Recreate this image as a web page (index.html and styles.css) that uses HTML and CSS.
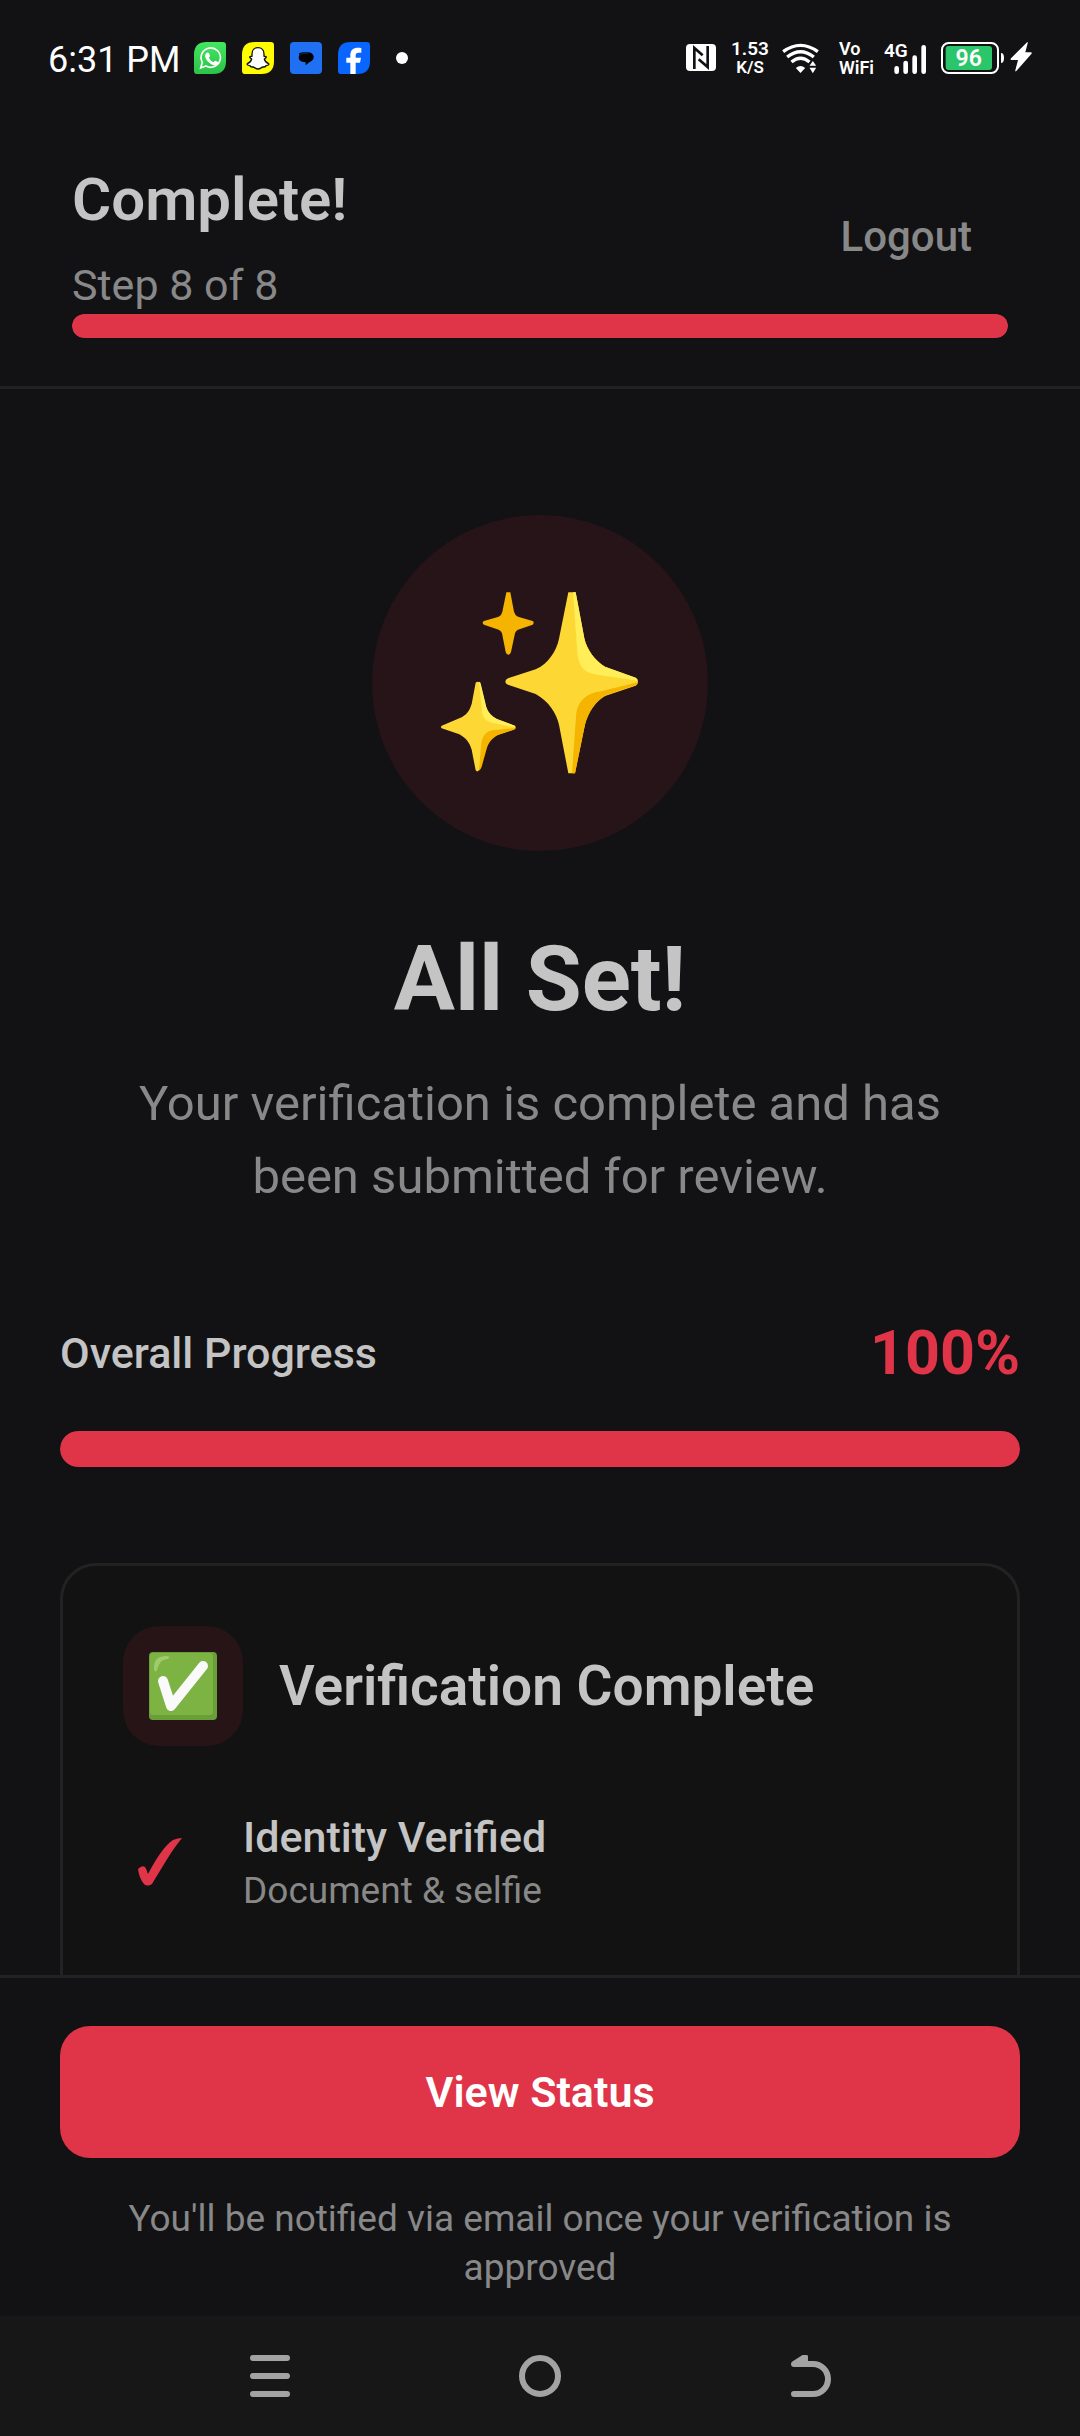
FILE: index.html
```html
<!DOCTYPE html>
<html lang="en">
<head>
<meta charset="utf-8">
<meta name="viewport" content="width=device-width, initial-scale=1">
<title>Verification complete</title>
<link rel="stylesheet" href="styles.css">
</head>
<body>
<div class="screen">
  <div class="status">
    <div class="status-left">
      <span class="clock">6:31 PM</span>
      <svg class="app-icon" viewBox="492 66 96 96" aria-label="WhatsApp">
        <defs><linearGradient id="wa" x1="0" y1="0" x2="0" y2="1"><stop offset="0" stop-color="#43e660"/><stop offset="1" stop-color="#2bc348"/></linearGradient></defs>
        <path fill="url(#wa)" d="M530 66h48q10 0 10 10v48q0 38-38 38h-48q-10 0-10-10v-48q0-38 38-38z"/>
        <path fill="none" stroke="#fff" stroke-width="5" d="M512 144l5-17a29 29 0 1 1 11 11z"/>
        <path fill="#fff" d="M529 99c4-3 7-2 8 1l3 7c1 3-4 5-3 7 3 6 7 9 12 12 3 1 4-5 7-4l8 4c3 2 0 7-3 9-7 4-17 0-25-8-9-9-15-21-7-28z"/>
      </svg>
      <svg class="app-icon" viewBox="636 66 96 96" aria-label="Snapchat">
        <path fill="#fffc00" d="M674 66h48q10 0 10 10v48q0 38-38 38h-48q-10 0-10-10v-48q0-38 38-38z"/>
        <path fill="#fff" stroke="#111" stroke-width="4" stroke-linejoin="round" d="M684 83c11 0 18 8 18 19v7c3 0 6-1 7 2 0 3-4 4-6 6 2 8 7 12 13 14 2 4-4 5-8 6-1 5-4 4-9 4-5 1-8 6-15 6s-10-5-15-6c-5 0-8 1-9-4-4-1-10-2-8-6 6-2 11-6 13-14-2-2-6-3-6-6 1-3 4-2 7-2v-7c0-11 7-19 18-19z"/>
      </svg>
      <svg class="app-icon" viewBox="780 66 96 96" aria-label="Messages">
        <rect x="780" y="66" width="96" height="96" rx="12" fill="#1f70f2"/>
        <path fill="#000" d="M824 97h9c22 0 24 25 6 29l-12 10v-9c-16-1-25-9-19-22-3-5 2-8 16-8z"/>
        <path fill="none" stroke="#17407f" stroke-width="2" d="M809 106q4-6 16-6h10"/>
      </svg>
      <svg class="app-icon" viewBox="924 66 96 96" aria-label="Facebook">
        <path fill="#0866ff" d="M962 66h48q10 0 10 10v48q0 38-38 38h-48q-10 0-10-10v-48q0-38 38-38z"/>
        <path fill="#fff" d="M961 162v-34h-12v-15h12v-8c0-16 9-22 23-22 4 0 8 0 10 1v14h-8c-7 0-9 3-9 8v7h16l-3 15h-13v34z"/>
      </svg>
      <span class="dot"></span>
    </div>
    <div class="status-right">
      <svg class="nfc" viewBox="78 66 90 96" aria-label="NFC">
        <rect x="78" y="72" width="90" height="81" rx="12" fill="#fff"/>
        <path fill="none" stroke="#121214" stroke-width="8" d="M103 147V84l25 22M143 78v63l-27-23"/>
      </svg>
      <span class="stack rate"><b>1.53</b><small>K/S</small></span>
      <svg class="wifi" viewBox="365 66 110 96" aria-label="Wi-Fi">
        <g fill="none" stroke="#fff" stroke-width="10"><path d="M368 95q52-38 104 0M380 111q40-32 80 0M393 126q27-23 54 0"/></g>
        <path fill="#fff" d="M406 144q14-12 28 0l-14 15zM447 137l10-14 10 14zM447 143h20l-10 17z"/>
      </svg>
      <span class="stack vowifi"><b>Vo</b><b>WiFi</b></span>
      <svg class="signal" viewBox="675 66 129 96">
        <text x="675" y="110" font-size="57">4G</text>
        <path fill="none" stroke="#fff" stroke-width="14" stroke-linecap="round" d="M713 145v10M740 129v26M767 113v42M794 82v73"/>
      </svg>
      <svg class="battery" viewBox="846 66 189 96">
        <rect x="849" y="69" width="168" height="90" rx="20" fill="none" stroke="#fff" stroke-width="6"/>
        <rect x="860" y="78" width="139" height="72" rx="9" fill="#2bc66b"/>
        <path fill="#fff" d="M1026 99q9 0 9 15t-9 15z"/>
        <text x="929" y="138" font-size="69" text-anchor="middle">96</text>
      </svg>
      <svg class="bolt" viewBox="1052 66 66 96" aria-label="Charging"><path fill="#fff" d="M1104 66q2 0 1 4l-7 27h17q4 1 1 5l-45 51q-4 3-3-2l8-31h-20q-4-1-1-5z"/></svg>
    </div>
  </div>

  <header class="header">
    <div class="header-row">
      <div>
        <h2 class="step-title">Complete!</h2>
        <p class="step-count">Step 8 of 8</p>
      </div>
      <button class="logout" type="button">Logout</button>
    </div>
    <div class="bar bar-small"><div class="bar-fill" style="width:100%"></div></div>
  </header>

  <main class="content">
    <div class="hero-icon">
      <svg viewBox="66 44 1008 1008" aria-hidden="true">
        <path fill="#f4b400" d="M469 276h12l11 58q3 11 12 15l44 13q6 5 0 11l-44 15q-7 3-9 11l-12 56q-2 8-8 8t-8-8l-11-56q-2-8-10-11l-44-15q-8-6 0-11l44-13q9-4 11-15z"/>
        <path fill="#fdd835" d="M655 276h22l26 138c7 33 32 68 62 85l92 33q7 4 7 12t-7 12l-92 31c-32 18-50 50-60 85l-30 147h-20l-28-146c-8-35-31-70-70-92l-83-28q-8-3-8-9t8-10l83-27c38-18 62-54 70-92z"/>
        <path fill="#ffee58" d="M669 276h8l26 138c7 33 32 68 62 85l92 33q6 3 6 9l-120-18c-41-5-56-22-61-67z"/>
        <path fill="#f4b400" d="M863 546q0 7-6 9l-86 28c-32 16-56 52-66 90l-30 146h-9l12-170c2-43 28-71 75-76z"/>
        <path fill="#fdd835" d="M377 547q6-6 13 0l18 73c5 16 16 28 32 36l55 20q4 5 0 10l-55 19c-18 9-30 24-35 45l-16 56q-6 12-12 4l-12-62c-7-23-17-34-37-46l-53-18q-4-4 0-8l53-22c21-9 30-21 37-43z"/>
        <path fill="#ffee58" d="M387 544q5 0 6 9l16 67c5 16 16 28 32 36l53 20 2 5-66-13c-24-5-32-15-34-35z"/>
        <path fill="#f4b400" d="M497 683q-1 4-5 5l-48 16c-18 9-30 24-35 45l-14 50q-3 9-8 12l6-73c2-39 21-50 50-50z"/>
      </svg>
    </div>
    <h1 class="headline">All Set!</h1>
    <p class="lead">Your verification is complete and has been submitted for review.</p>

    <div class="progress-row">
      <span class="progress-label">Overall Progress</span>
      <span class="progress-value">100%</span>
    </div>
    <div class="bar bar-large"><div class="bar-fill" style="width:100%"></div></div>

    <section class="card">
      <div class="card-head">
        <div class="card-icon">
          <svg viewBox="0 0 68 68" aria-hidden="true">
            <rect width="68" height="68" rx="4" fill="#689f38"/>
            <rect x="1" y="1" width="63" height="62" rx="3" fill="#7cb342"/>
            <path fill="#aed581" opacity=".7" d="M5 17C5 7 9 4 18 4q4 1 1 3C11 8 10 12 8 18q-2 4-3-1z"/>
            <path fill="none" stroke="#fafafa" stroke-width="10" stroke-linecap="round" stroke-linejoin="round" d="M14 29l8 25 32-40"/>
          </svg>
        </div>
        <h2 class="card-title">Verification Complete</h2>
      </div>
      <ul class="checks">
        <li class="check">
          <svg class="tick" viewBox="0 0 46 48" aria-hidden="true"><path fill="#e03548" d="M1 31q4-4 7-2 2 3 3 7C19 21 27 8 36 2q5-2 9-2C35 12 26 28 15 46q-5 3-8 0Q2 40 1 31z"/></svg>
          <div>
            <h3 class="check-title">Identity Verified</h3>
            <p class="check-note">Document &amp; selfie</p>
          </div>
        </li>
      </ul>
    </section>
  </main>

  <footer class="footer">
    <button class="primary" type="button">View Status</button>
    <p class="footnote">You'll be notified via email once your verification is approved</p>
  </footer>

  <nav class="system-nav">
    <button type="button" aria-label="Recent apps"><svg viewBox="0 0 42 42"><path d="M4 3h34M4 21h34M4 39h34"/></svg></button>
    <button type="button" aria-label="Home"><svg viewBox="0 0 42 42"><circle cx="21" cy="21" r="18"/></svg></button>
    <button type="button" aria-label="Back"><svg viewBox="0 0 42 42"><path d="M5 39h19a15 15 0 0 0 0-30H5l11-7"/><path d="M9 8l7-4v4z"/></svg></button>
  </nav>
</div>
</body>
</html>
```
FILE: styles.css
```css
* { box-sizing: border-box; }

body, h1, h2, h3, p, ul { margin: 0; padding: 0; }

body {
  background: #121214;
  color: #c4c4c4;
  font-family: Roboto, "Liberation Sans", sans-serif;
}

button {
  border: 0;
  background: none;
  font-family: inherit;
  cursor: pointer;
}

svg { display: block; }

.screen {
  display: flex;
  flex-direction: column;
  height: 100vh;
}

/* System status bar */
.status {
  display: flex;
  flex: none;
  justify-content: space-between;
  align-items: center;
  height: 116px;
  padding: 0 48px;
  color: #fff;
}

.status-left, .status-right { display: flex; align-items: center; }
.status-left { gap: 16px; }
.clock { margin-right: -3px; padding-top: 3px; font-size: 36px; line-height: 40px; }
.app-icon { width: 32px; height: 32px; }
.dot { width: 12px; height: 12px; margin-left: 10px; border-radius: 50%; background: #fff; }

.status svg text { fill: #fff; font-weight: 600; }
.stack { display: flex; flex-direction: column; align-items: center; font-size: 19px; line-height: 19px; }
.stack b, .stack small { font-weight: 600; }
.stack small { font-size: 17px; }
.vowifi { align-items: flex-start; font-size: 18px; }
.rate { margin: 0 13px 0 15px; }
.nfc { width: 30px; height: 32px; }
.wifi { width: 37px; height: 32px; margin-right: 20px; }
.signal { width: 43px; height: 32px; margin-left: 10px; overflow: visible; }
.battery { width: 63px; height: 32px; margin-left: 14px; }
.bolt { width: 22px; height: 32px; margin-left: 6px; }

/* Step header */
.header {
  flex: none;
  padding: 48px 72px;
  border-bottom: 3px solid #222;
}

.header-row {
  display: flex;
  justify-content: space-between;
  align-items: center;
  margin-bottom: 4px;
}

.step-title { margin-bottom: 24px; font-size: 60px; line-height: 72px; font-weight: 600; }
.step-count { color: #888; font-size: 43px; line-height: 50px; }
.logout { padding: 12px 36px; color: #888; font-size: 42px; line-height: 50px; font-weight: 500; }

.bar { overflow: hidden; background: #222; }
.bar-fill { height: 100%; border-radius: inherit; background: #e03548; }
.bar-small { height: 24px; border-radius: 12px; }
.bar-large { height: 36px; border-radius: 18px; }

.content {
  flex: 1;
  min-height: 0;
  overflow: hidden;
  padding: 126px 60px 0;
}

.hero-icon {
  width: 336px;
  height: 336px;
  margin: 0 auto 74px;
  border-radius: 50%;
  background: #271418;
}

.headline { margin-bottom: 34px; font-size: 91px; line-height: 108px; font-weight: 700; text-align: center; }
.lead { padding: 0 60px; color: #888; font-size: 49px; line-height: 73px; text-align: center; }

.progress-row {
  display: flex;
  justify-content: space-between;
  align-items: center;
  margin: 104px 0 42px;
  line-height: 72px;
}

.progress-label { font-size: 43px; font-weight: 500; }
.progress-value { color: #e03548; font-size: 61px; font-weight: 700; }

/* The card runs on below the fold */
.card {
  margin-top: 96px;
  padding: 60px 60px 120px;
  border: 3px solid #222;
  border-radius: 36px;
  background: #121212;
}

.card-head { display: flex; align-items: center; gap: 36px; margin-bottom: 66px; }

.card-icon {
  display: grid;
  place-items: center;
  width: 120px;
  height: 120px;
  border-radius: 36px;
  background: #271416;
}

.card-icon svg { width: 68px; height: 68px; }
.card-title { font-size: 55px; line-height: 66px; font-weight: 600; }

.checks { list-style: none; }
.check { display: flex; align-items: center; gap: 46px; }
.tick { width: 74px; height: 48px; }
.check-title { margin-bottom: 8px; font-size: 43px; line-height: 50px; font-weight: 500; }
.check-note { color: #888; font-size: 37px; line-height: 42px; }

/* Footer action */
.footer {
  flex: none;
  padding: 48px 60px 24px;
  border-top: 3px solid #222;
  text-align: center;
}

.primary {
  display: block;
  width: 100%;
  margin-bottom: 36px;
  padding: 41px;
  border-radius: 30px;
  background: #e03548;
  color: #fff;
  font-size: 43px;
  line-height: 50px;
  font-weight: 600;
}

.footnote { padding: 0 60px; color: #888; font-size: 37px; line-height: 49px; }

/* System navigation */
.system-nav {
  display: flex;
  flex: none;
  justify-content: space-around;
  align-items: center;
  height: 120px;
  padding: 0 135px;
  background: #171717;
}

.system-nav button { padding: 12px; }
.system-nav svg { width: 42px; height: 42px; fill: none; stroke: #a3a3a3; stroke-width: 6; stroke-linecap: round; stroke-linejoin: round; }
```
